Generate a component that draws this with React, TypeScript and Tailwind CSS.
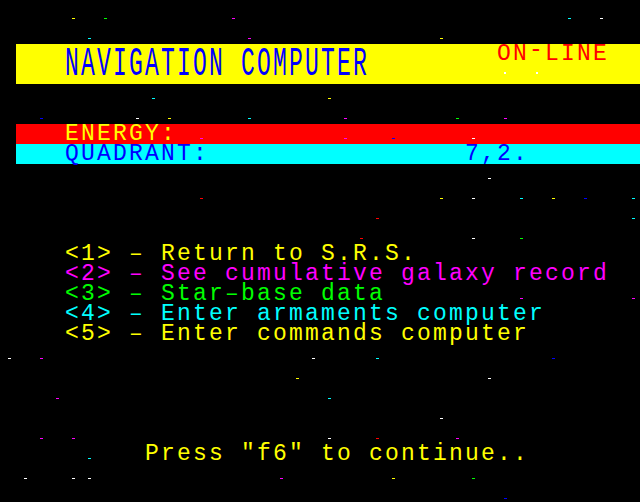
import React from 'react';

type Code = 'Y' | 'R' | 'G' | 'B' | 'M' | 'C' | 'W';

const FG: Record<Code, string> = {
  Y: 'text-[#ffff00]',
  R: 'text-[#ff0000]',
  G: 'text-[#00ff00]',
  B: 'text-[#0000ff]',
  M: 'text-[#ff00ff]',
  C: 'text-[#00ffff]',
  W: 'text-[#ffffff]',
};

const BG: Record<Code, string> = {
  Y: 'bg-[#ffff00]',
  R: 'bg-[#ff0000]',
  G: 'bg-[#00ff00]',
  B: 'bg-[#0000ff]',
  M: 'bg-[#ff00ff]',
  C: 'bg-[#00ffff]',
  W: 'bg-[#ffffff]',
};

type Cell = { ch?: string; fg?: Code; bg?: Code; star?: Code };

// 40x25 teletext page
const grid: Cell[][] = Array.from({ length: 25 }, () => Array.from({ length: 40 }, () => ({} as Cell)));

const put = (r: number, c: number, text: string, fg: Code) => {
  [...text].forEach((ch, i) => {
    grid[r][c + i].ch = ch;
    grid[r][c + i].fg = fg;
  });
};

const fill = (r: number, from: number, bg: Code) => {
  for (let c = from; c < 40; c++) grid[r][c].bg = bg;
};

// [row, col, colour]
const stars: [number, number, Code][] = [
  [0, 4, 'Y'], [0, 6, 'G'], [0, 14, 'M'], [0, 35, 'C'], [0, 37, 'W'],
  [1, 5, 'C'], [1, 15, 'M'], [1, 27, 'Y'],
  [4, 9, 'C'], [4, 20, 'Y'],
  [5, 2, 'B'], [5, 8, 'W'], [5, 10, 'Y'], [5, 15, 'C'], [5, 21, 'M'], [5, 28, 'G'], [5, 31, 'M'],
  [6, 12, 'M'], [6, 21, 'M'], [6, 24, 'B'], [6, 29, 'W'],
  [8, 30, 'W'],
  [9, 12, 'R'], [9, 27, 'Y'], [9, 29, 'W'], [9, 32, 'C'], [9, 34, 'Y'], [9, 36, 'B'], [9, 39, 'C'],
  [10, 23, 'R'], [10, 39, 'C'],
  [11, 22, 'R'], [11, 29, 'W'], [11, 32, 'G'],
  [14, 32, 'M'], [14, 39, 'M'],
  [17, 0, 'W'], [17, 2, 'M'], [17, 19, 'W'], [17, 23, 'C'], [17, 34, 'B'],
  [18, 18, 'Y'], [18, 30, 'W'],
  [19, 3, 'M'], [19, 20, 'C'],
  [20, 27, 'W'],
  [21, 2, 'M'], [21, 4, 'M'], [21, 20, 'W'], [21, 23, 'R'], [21, 28, 'M'],
  [22, 5, 'C'],
  [23, 1, 'W'], [23, 4, 'W'], [23, 5, 'W'], [23, 17, 'M'], [23, 24, 'Y'], [23, 29, 'G'],
  [24, 31, 'B'],
];
stars.forEach(([r, c, col]) => (grid[r][c].star = col));

fill(6, 1, 'R');
fill(7, 1, 'C');
put(6, 4, 'ENERGY:', 'Y');
put(7, 4, 'QUADRANT:', 'B');
put(7, 29, '7,2.', 'B');
put(12, 4, '<1> – Return to S.R.S.', 'Y');
put(13, 4, '<2> – See cumulative galaxy record', 'M');
put(14, 4, '<3> – Star–base data', 'G');
put(15, 4, '<4> – Enter armaments computer', 'C');
put(16, 4, '<5> – Enter commands computer', 'Y');
put(22, 9, 'Press "f6" to continue..', 'Y');

const CellView: React.FC<{ cell: Cell }> = ({ cell }) => (
  <div className={`w-4 h-5 shrink-0 ${cell.bg ? BG[cell.bg] : ''}`}>
    {cell.star ? (
      <span className={`block ml-2 mt-[14px] w-[3px] h-px ${BG[cell.star]}`} />
    ) : cell.ch && cell.ch !== ' ' ? (
      <span className={`block text-center text-[23px] leading-5 ${FG[cell.fg ?? 'W']}`}>{cell.ch}</span>
    ) : null}
  </div>
);

const Row: React.FC<{ cells: Cell[] }> = ({ cells }) => (
  <div className="flex h-5">
    {cells.map((c, i) => (
      <CellView key={i} cell={c} />
    ))}
  </div>
);

const TitleBar: React.FC = () => (
  <div className="flex h-10">
    <div className="w-4 shrink-0" />
    <div className="flex flex-1 bg-[#ffff00]">
      <div className="w-12 shrink-0" />
      {[...'NAVIGATION COMPUTER'].map((ch, i) => (
        <div key={i} className="w-4 h-10 shrink-0">
          <span className="block text-center text-[23px] leading-10 scale-y-[1.75] text-[#0000ff]">{ch}</span>
        </div>
      ))}
      <div className="w-32 shrink-0" />
      <div className="flex flex-col">
        <div className="flex h-5">
          {[...'ON-LINE'].map((ch, i) => (
            <div key={i} className="w-4 h-5 shrink-0">
              <span
                className={`block text-center text-[23px] leading-5 text-[#ff0000] ${
                  ch === '-' ? '-translate-y-[4px]' : ''
                }`}
              >
                {ch}
              </span>
            </div>
          ))}
        </div>
        <div className="flex h-5">
          <div className="w-4"><span className="block ml-2 mt-2 w-0.5 h-0.5 bg-white" /></div>
          <div className="w-4" />
          <div className="w-4"><span className="block ml-2 mt-2 w-0.5 h-0.5 bg-white" /></div>
        </div>
      </div>
    </div>
  </div>
);

const App: React.FC = () => {
  return (
    <div className="w-[640px] h-[502px] overflow-hidden bg-black pt-1 font-['Liberation_Mono',monospace]">
      <Row cells={grid[0]} />
      <Row cells={grid[1]} />
      <TitleBar />
      {grid.slice(4).map((cells, i) => (
        <Row key={i + 4} cells={cells} />
      ))}
    </div>
  );
};

export default App;
